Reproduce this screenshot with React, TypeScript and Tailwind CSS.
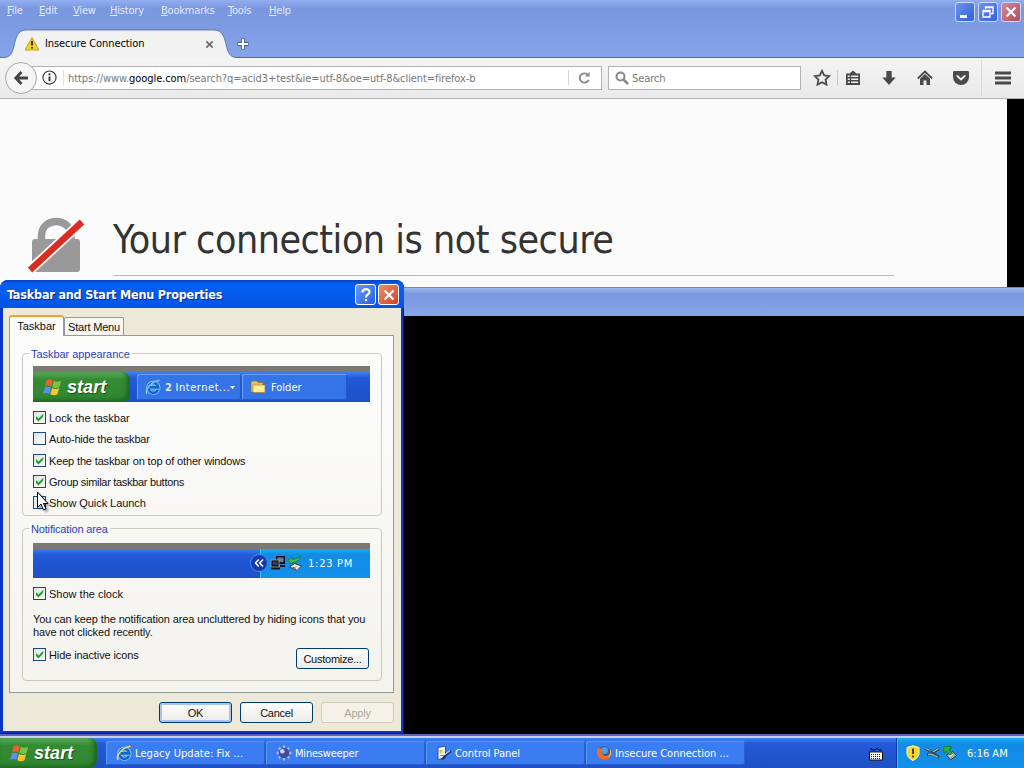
import React from "react";

const TAHOMA = "font-['DejaVu_Sans_Condensed','DejaVu_Sans',sans-serif]";
const SANS = "font-['Liberation_Sans',Arial,sans-serif]";

function WindowsFlag({ className }: { className?: string }) {
  return (
    <svg viewBox="0 0 20 20" className={className}>
      <path d="M3.6 3.2C5.8 1.9 7.9 2 10 3.2L8.3 9.4C6.3 8.2 4.2 8.2 2 9.4Z" fill="#e8602c" />
      <path d="M11 3.8c2.2 1.2 4.6 1.3 7.2 0L16.500 10c-2.400 1.300-4.800 1.200-7.200 0Z" fill="#7cc142" />
      <path d="M1.700 10.600c2.200-1.200 4.300-1.200 6.300 0L6.300 16.800C4.300 15.600 2.200 15.600 0 16.800Z" fill="#5b8ff0" />
      <path d="M9 11.100c2.400 1.300 4.800 1.300 7.200 0l-1.700 6.200c-2.400 1.300-4.800 1.300-7.200 0Z" fill="#f7c52c" />
    </svg>
  );
}

function IEIcon({ className, ring = "#f3d867" }: { className?: string; ring?: string }) {
  return (
    <svg viewBox="0 0 16 16" className={className}>
      <path d="M13 10.600A5 5 0 1 1 13.300 8.400H5" fill="none" stroke="#8fd4ff" strokeWidth="4" />
      <path d="M13 10.600A5 5 0 1 1 13.300 8.400H5" fill="none" stroke="#1668c4" strokeWidth="2.700" />
      <path d="M2 15C-.5 11 6 2.500 14.500 1.200" fill="none" stroke={ring} strokeWidth="1.500" />
    </svg>
  );
}

function Folder() {
  return (
    <svg viewBox="0 0 16 16" className="size-4">
      <path d="M1 3.500 2 2h5l1 1.500h5V13H1z" fill="#e8bf55" stroke="#8e6c1b" strokeWidth=".6" />
      <path d="M3 6H15V13.500H3z" fill="#ffeda0" stroke="#a27b22" strokeWidth=".6" />
    </svg>
  );
}

function Mine() {
  return (
    <svg viewBox="0 0 16 16" className="size-4">
      <path d="M8 .5V15.500M.5 8H15.500M2.800 2.800 13.200 13.200M13.200 2.800 2.800 13.200" stroke="#aab8f4" strokeWidth="2.300" />
      <circle cx="8" cy="8" r="5.300" fill="#454c95" />
      <circle cx="6.300" cy="6.300" r="2.300" fill="#cdd5ff" />
    </svg>
  );
}

function ControlPanelIcon() {
  return (
    <svg viewBox="0 0 16 16" className="size-4">
      <path d="M2 2.500 9.500 1V13L2 14.500z" fill="#e9edf2" stroke="#2c4a85" strokeWidth=".9" />
      <path d="M3.500 5h3v3h-3z" fill="#e7c23b" />
      <path d="M4.500 10.500h3" stroke="#4c9a49" />
      <path d="M6 14.500 9.500 10.500 15 6" fill="none" stroke="#1f345f" strokeWidth="2.200" />
      <path d="M9 9.500l5-4" stroke="#b9c9e6" strokeWidth="1.200" />
    </svg>
  );
}

function FirefoxIcon() {
  return (
    <svg viewBox="0 0 16 16" className="size-4">
      <circle cx="8" cy="7.500" r="6.500" fill="#2d5fae" />
      <circle cx="8.500" cy="5.500" r="3.500" fill="#4f9fdf" />
      <path d="M2 2.500C.3 5.500.5 9.500 2.500 12c3.300 4 9.500 3.600 12-.8 1.300-2.400 1-5.500-.2-7.500.5 3.800-1 7-4.300 7.300-2 .1-3-1-3.500-2.300C5 8.500 5 6.500 7 6.400 5.500 6 5 4.500 5 3.500 4 3.500 3 3.300 2 2.500z" fill="#f06a21" />
      <path d="M14.300 3.700c1.500 3 .8 7.300-2.300 9.300 1.800-2.500 2.500-6 2.300-9.300z" fill="#ffc73a" />
    </svg>
  );
}

function EjectIcon({ className }: { className?: string }) {
  return (
    <svg viewBox="0 0 16 16" className={className}>
      <path d="M2.500 12 7.500 8.500l7 2.500L10 15.500z" fill="#dfe3e0" stroke="#333" strokeWidth=".9" />
      <path d="M5.500 12.300l3.500 1" stroke="#555" />
      <path d="M.8 5.500 5 2.500V4.200C9 4.200 11 3 13.500.8 12.500 5 10 7.600 5.500 7.600V9.500z" fill="#3fbb3a" stroke="#14641a" strokeWidth=".6" />
    </svg>
  );
}

function DriveIcon({ className }: { className?: string }) {
  return (
    <svg viewBox="0 0 16 16" className={className}>
      <path d="M4.500 10 11 6.500l3.500 4L8.500 15z" fill="#9fb0ae" stroke="#2a3f44" strokeWidth="1" />
      <path d="M7 11.500l4-2.300" stroke="#e4ebe8" strokeWidth="1.300" />
      <path d="M1.500 1.500H9V4L7 5l3.500 3.500L8 10 4.500 6.500 2 8z" fill="#2fae34" stroke="#15651c" strokeWidth=".6" />
    </svg>
  );
}

function Network() {
  return (
    <svg viewBox="0 0 16 16" className="size-4">
      <path d="M6 1h9v8H6z" fill="#111" />
      <path d="M7.500 2.500h6v4.500h-6z" fill="#6c7fae" />
      <path d="M1 5h8v7H1z" fill="#111" stroke="#b9b9a9" strokeWidth=".7" />
      <path d="M2.500 6.500h5v3.500h-5z" fill="#2c3c74" />
      <path d="M1 13.500h9M10 11h5" stroke="#111" strokeWidth="2" />
    </svg>
  );
}

function CheckBox({ checked }: { checked?: boolean }) {
  return (
    <span className="flex size-[13px] shrink-0 items-center justify-center border border-[#1d4b78] bg-linear-to-br from-[#dde2e6] to-white">
      {checked && (
        <svg viewBox="0 0 9 9" className="size-[9px]">
          <path d="M1 3v3l2.500 2.500L8.300 3.500V.7L3.500 5.500z" fill="#21a121" />
        </svg>
      )}
    </span>
  );
}

function Option({ label, checked, height = "h-[21px]", tracking = "" }: { label: string; checked?: boolean; height?: string; tracking?: string }) {
  return (
    <label className={`flex items-center gap-[3px] whitespace-nowrap ${height} ${tracking}`}>
      <CheckBox checked={checked} />
      <span className="pt-[2px] leading-[13px]">{label}</span>
    </label>
  );
}

const menus = [
  ["File", "w-8"],
  ["Edit", "w-[34px]"],
  ["View", "w-[37px]"],
  ["History", "w-[51px]"],
  ["Bookmarks", "w-[67px]"],
  ["Tools", "w-[41px]"],
  ["Help", "w-10"],
];

function CaptionButton({ children, tone }: { children: React.ReactNode; tone: string }) {
  return (
    <span className={`flex size-5 items-center justify-center rounded-[3px] border border-[#c9d7fb] ${tone}`}>
      <svg viewBox="0 0 18 18" className="size-[18px]" fill="none" stroke="#fff">{children}</svg>
    </span>
  );
}

function Browser() {
  return (
    <section className={`absolute inset-x-0 top-0 flex h-[287px] flex-col ${TAHOMA}`}>
      <header className="flex h-[58px] shrink-0 flex-col bg-linear-to-b from-[#93aef0] via-[#7a96df] via-15% to-[#84a4ea] shadow-[inset_0_-1px_0_#5266a5]">
        <div className="flex h-[26px] shrink-0 items-start justify-between">
          <nav className="flex pt-1 pl-[7px] text-[11px] leading-[14px] tracking-[-0.2px] text-[#e2ebfd]">
            {menus.map(([m, w]) => (
              <span key={m} className={w}>
                <u className="underline-offset-1">{m[0]}</u>{m.slice(1)}
              </span>
            ))}
          </nav>
          <div className="flex gap-[3px] pt-[2px] pr-[3px]">
            <CaptionButton tone="bg-linear-to-br from-[#6f93ee] to-[#2f5fdc]"><path d="M4 13.500h7" strokeWidth="3" /></CaptionButton>
            <CaptionButton tone="bg-linear-to-br from-[#6f93ee] to-[#2f5fdc]"><path d="M6.500 6V4h7.500v6.500h-2.500M6.500 4.500H14" strokeWidth="1.300" /><path d="M4 7.500h7v6.500H4zM4 8.500h7" strokeWidth="1.300" /></CaptionButton>
            <CaptionButton tone="bg-linear-to-br from-[#d08a9a] to-[#b24a5c]"><path d="M4.500 4.500l9 9M13.500 4.500l-9 9" strokeWidth="2.200" /></CaptionButton>
          </div>
        </div>
        <div className="flex h-8 shrink-0 items-start">
          <div className="relative flex h-8 w-[232px] items-center pt-1 pl-6">
            <svg viewBox="0 0 240 32" className="absolute top-0 left-0 h-8 w-[240px]">
              <path d="M0 32V31.500H3C11 31.500 12 27 14 20 16 11 18 4 26 4H214C222 4 224 10 226 18 228 27 230 31.500 237 31.500V32z" fill="#f2f2f3" />
              <path d="M8 31H231V32H8z" fill="#f2f2f3" />
              <path d="M0 31.500H3C11 31.500 12 27 14 20 16 11 18 4 26 4H214C222 4 224 10 226 18 228 27 230 31.500 237 31.500" fill="none" stroke="#4d64a8" strokeWidth=".8" />
            </svg>
            <svg viewBox="0 0 16 16" className="relative size-4">
              <path d="M8 1.500 15 14H1z" fill="#f4d21f" stroke="#c3a327" strokeWidth="1" strokeLinejoin="round" />
              <path d="M8 5v4.500M8 11v1.600" stroke="#222" strokeWidth="1.800" />
            </svg>
            <span className="relative ml-[5px] w-[160px] pt-px text-[11px] tracking-[-0.1px] text-black">Insecure Connection</span>
            <svg viewBox="0 0 10 10" className="relative h-[9px] w-[9px]"><path d="M1.500 1.500l7 7M8.500 1.500l-7 7" stroke="#6e6e6e" strokeWidth="2" /></svg>
          </div>
          <svg viewBox="0 0 12 12" className="mt-3 ml-[5px] size-3"><path d="M6 .5v11M.5 6h11" stroke="#4a5c94" strokeWidth="4" /><path d="M6 1v10M1 6h10" stroke="#fff" strokeWidth="2.200" /></svg>
        </div>
      </header>
      <div className="flex h-[41px] shrink-0 items-center border-b border-b-[#b5b5b5] bg-linear-to-b from-[#f4f4f4] to-[#e9e9e9] pb-px">
        <div className="z-10 ml-[5px] flex size-8 shrink-0 items-center justify-center rounded-full border border-[#a8a8a8] bg-[#f5f5f5]">
          <svg viewBox="0 0 16 16" className="size-4" fill="none" stroke="#444" strokeWidth="2.800"><path d="M8.500 2 2.800 8l5.700 6M3 8h12" /></svg>
        </div>
        <div className="-ml-2 flex h-6 w-[573px] items-center border border-[#b3b3b3] bg-white pl-3">
          <svg viewBox="0 0 16 16" className="size-[15px]" fill="none" stroke="#333"><circle cx="8" cy="8" r="7" strokeWidth="1.200" /><path d="M8 7v5M8 3.500v2" strokeWidth="2" /></svg>
          <span className="ml-1.5 h-4 w-px bg-[#e0e0e0]" />
          <span className="ml-[4px] w-[500px] pt-[3px] text-[11px] tracking-[-0.07px] whitespace-nowrap text-[#777]">https://www.<span className="text-black">google.com</span>/search?q=acid3+test&amp;ie=utf-8&amp;oe=utf-8&amp;client=firefox-b</span>
          <span className="h-[15px] w-px bg-[#d5d5d5]" />
          <svg viewBox="0 0 14 14" className="ml-[9px] size-[13px]" fill="none" stroke="#888" strokeWidth="2"><path d="M11.500 9.500A5 5 0 1 1 10.500 4" /><path d="M12.500 1v5h-5z" fill="#888" stroke="none" /></svg>
        </div>
        <div className="ml-1.5 flex h-6 w-[193px] items-center border border-[#b3b3b3] bg-white pl-1.5 text-[11px] text-[#777]">
          <svg viewBox="0 0 14 14" className="size-[14px]" fill="none" stroke="#888" strokeWidth="2"><circle cx="5.500" cy="5.500" r="4" /><path d="M8.500 8.500l4.500 4.500" strokeWidth="2.500" /></svg>
          <span className="ml-[3px] pt-[3px] tracking-[-0.1px]">Search</span>
        </div>
        <div className="flex flex-1 items-center">
          <svg viewBox="0 0 18 18" className="ml-3 size-[18px]" fill="none" stroke="#4a4a4a" strokeWidth="1.800"><path d="M9 1.800l2.200 4.600 5 .7-3.600 3.500.9 5L9 13.200l-4.500 2.400.9-5L1.800 7.100l5-.7z" /></svg>
          <span className="ml-[6px] h-[15px] w-px bg-[#c9c9c9]" />
          <svg viewBox="0 0 16 16" className="ml-[7px] size-4"><path d="M1 3.500h3.500L8 .5l3.500 3H15V15H1z" fill="#4a4a4a" /><path d="M2.800 6.200h2M6.200 6.200h7M2.800 9.200h2M6.200 9.200h7M2.800 12.200h2M6.200 12.200h7" stroke="#f0f0f0" strokeWidth="1.500" /></svg>
          <svg viewBox="0 0 16 16" className="ml-5 size-4"><path d="M5.300 1h5.400v6.500h4L8 15 1.300 7.500h4z" fill="#4a4a4a" /></svg>
          <svg viewBox="0 0 16 16" className="ml-5 size-4"><path d="M.8 8.500 8 1.500l7.200 7" fill="none" stroke="#4a4a4a" strokeWidth="1.800" /><path d="M3 8.700l5-4.800 5 4.800V15H9.500v-4.500h-3V15H3z" fill="#4a4a4a" /></svg>
          <svg viewBox="0 0 16 16" className="ml-5 size-4"><path d="M1.500 1h13c1 0 1.500.5 1.500 1.500V7a8 8 0 0 1-16 0V2.500C0 1.500.5 1 1.500 1z" fill="#4a4a4a" /><path d="M4.300 6l3.700 3.500L11.700 6" fill="none" stroke="#f0f0f0" strokeWidth="1.900" strokeLinecap="round" /></svg>
          <span className="ml-[12px] h-9 w-px bg-[#d8d8d8]" />
          <svg viewBox="0 0 16 14" className="ml-[13px] h-[14px] w-4"><path d="M0 2h16M0 7h16M0 12h16" stroke="#4a4a4a" strokeWidth="2.800" /></svg>
        </div>
      </div>
      <div className="flex flex-1 bg-black">
        <div className="flex w-[1007px] items-start bg-[#fbfbfb] pt-[117px] pl-7">
          <svg viewBox="0 0 58 58" className="h-[58px] w-[58px]">
            <path d="M13.500 28V20C13.500 .5 43 .5 43 20V28" fill="none" stroke="#999" strokeWidth="7.500" />
            <rect x="4" y="23" width="48" height="33" rx="3" fill="#999" />
            <path d="M2 54 54 6" stroke="#fbfbfb" strokeWidth="10" />
            <path d="M2 54 54 6" stroke="#d92d21" strokeWidth="6.500" />
          </svg>
          <h1 className="ml-[27px] h-[60px] w-[781px] border-b border-[#b9b9b9] pt-px text-[39px] leading-[46px] tracking-[-0.48px] whitespace-nowrap text-[#333]">Your connection is not secure</h1>
        </div>
      </div>
    </section>
  );
}

function StartButton() {
  return (
    <div className="flex w-[97px] shrink-0 items-center rounded-r-lg bg-linear-to-b from-[#5cac5a] via-[#338b34] via-25% to-[#2f8630] pl-[10px] shadow-[inset_-3px_-2px_4px_#1d6420]">
      <WindowsFlag className="size-5" />
      <span className="ml-1 font-['Liberation_Sans',Arial,sans-serif] text-[18px] leading-5 font-bold tracking-[0.05px] text-white italic [text-shadow:1px_1px_1px_#1a4d1b]">start</span>
    </div>
  );
}

function Button({ label, kind = "" }: { label: string; kind?: string }) {
  const look =
    kind === "default"
      ? "border-[#003c74] bg-linear-to-b from-white to-[#ecebe6] shadow-[inset_0_0_0_2px_#a9c4f2]"
      : kind === "disabled"
        ? "border-[#d0cdbd] bg-[#f3f1e8] text-[#aca899]"
        : "border-[#003c74] bg-linear-to-b from-white to-[#ecebe6]";
  return <button className={`flex h-[21px] w-[73px] items-center justify-center rounded-[3px] border pt-px tracking-[-0.25px] ${look}`}>{label}</button>;
}

function Properties() {
  return (
    <section className="absolute top-[280px] left-0 flex h-[454px] w-[404px] flex-col overflow-hidden rounded-t-[8px] bg-[#0a35c8] shadow-[inset_-1px_-1px_0_#00138c]">
      <header className="flex h-[28px] shrink-0 items-center justify-between bg-linear-to-b from-[#0842c0] via-[#0460f5] via-15% to-[#0455e6] pt-[1px] pr-[5px] pl-[7px]">
        <h2 className="pt-[2px] font-['DejaVu_Sans_Condensed','DejaVu_Sans',sans-serif] text-[12.500px] font-bold tracking-[-0.19px] text-white [text-shadow:1px_1px_0_#0a2a80]">Taskbar and Start Menu Properties</h2>
        <div className="flex gap-[2px]">
          <span className="flex size-[21px] items-center justify-center rounded-[3px] border border-white bg-linear-to-br from-[#6b97f5] to-[#2360e0]">
            <svg viewBox="0 0 18 18" className="size-[18px]" fill="none" stroke="#fff" strokeWidth="2.200"><path d="M5.500 6.500C5.500 2 12.500 2 12.500 6 12.500 8.500 9 8.500 9 11.500M9 13v2.200" /></svg>
          </span>
          <span className="flex size-[21px] items-center justify-center rounded-[3px] border border-white bg-linear-to-br from-[#ee8a6c] to-[#d0401c]">
            <svg viewBox="0 0 18 18" className="size-[18px]" fill="none" stroke="#fff" strokeWidth="2.200"><path d="M4.500 4.500l9 9M13.500 4.500l-9 9" /></svg>
          </span>
        </div>
      </header>
      <div className={`mx-[3px] mb-[3px] flex h-[423px] flex-col bg-[#ece9d8] pt-[6px] pr-[7px] pl-[6px] text-[11px] text-[#111] ${SANS}`}>
        <div className="z-10 flex h-[21px] items-end">
          <div className="-mb-px flex h-[21px] w-[55px] items-center justify-center rounded-t-[3px] border border-t-2 border-[#919b9c] border-t-[#f0a02c] border-b-0 bg-[#fcfcfb] pb-px">Taskbar</div>
          <div className="flex h-[18px] w-[60px] items-center justify-center rounded-t-[2px] border border-b-0 border-[#919b9c] bg-[#f7f6f1] pt-px tracking-[-0.2px] whitespace-nowrap">Start Menu</div>
        </div>
        <div className="flex h-[358px] flex-col border border-[#919b9c] bg-linear-to-b from-[#fcfcfb] to-[#f4f3ee] pt-[11px] pr-[11px] pl-3">
          <fieldset className="h-[169px] min-w-0 rounded-[4px] border border-[#cccabf] px-[10px]">
            <legend className="-ml-[4px] h-[13px] px-[2px] leading-[15px] tracking-[-0.05px] text-[#2b3fc0]">Taskbar appearance</legend>
            <div className={`mt-[6px] flex h-9 w-[337px] border-t-[6px] border-[#7b7972] bg-linear-to-b from-[#3f80f5] via-[#2159d8] via-20% to-[#1e50c8] text-[11px] text-white ${TAHOMA}`}>
              <StartButton />
              <div className="my-[2px] ml-[7px] flex w-[104px] items-center rounded-[2px] bg-[#3573e8] pl-2 shadow-[inset_1px_1px_0_#6ba0ff,inset_-1px_-1px_0_#2458c8]">
                <IEIcon className="size-4" ring="#7cc4f8" />
                <span className="ml-1 pt-[2px] tracking-[0.55px] whitespace-nowrap"><b className="mr-[3px] text-[#e8e6d8]">2</b>Internet...</span>
                <svg viewBox="0 0 5 3" className="h-[3px] w-[5px] shrink-0"><path d="M0 0h5L2.500 3z" fill="#fff" /></svg>
              </div>
              <div className="my-[2px] ml-[1px] flex w-[105px] items-center gap-[5px] rounded-[2px] bg-[#3573e8] pl-2 shadow-[inset_1px_1px_0_#6ba0ff,inset_-1px_-1px_0_#2458c8]">
                <Folder />
                <span className="pt-[2px]">Folder</span>
              </div>
            </div>
            <div className="mt-[5px] flex flex-col">
              <Option label="Lock the taskbar" checked />
              <Option label="Auto-hide the taskbar" tracking="tracking-[-0.18px]" />
              <Option label="Keep the taskbar on top of other windows" checked height="h-[22px]" tracking="tracking-[-0.15px]" />
              <Option label="Group similar taskbar buttons" checked tracking="tracking-[-0.3px]" />
              <Option label="Show Quick Launch" tracking="tracking-[-0.06px]" />
            </div>
          </fieldset>
          <fieldset className="mt-[6px] h-[159px] min-w-0 rounded-[4px] border border-[#cccabf] px-[10px]">
            <legend className="-ml-[4px] h-[13px] px-[2px] leading-[15px] tracking-[-0.17px] text-[#2b3fc0]">Notification area</legend>
            <div className={`mt-[8px] flex h-[35px] w-[337px] border-t-[6px] border-[#7b7972] bg-linear-to-b from-[#3f80f5] via-[#2159d8] via-20% to-[#1e50c8] text-[11px] text-white ${TAHOMA}`}>
              <div className="w-[227px]" />
              <div className="flex flex-1 items-center bg-linear-to-b from-[#18b0f5] via-[#128be6] via-20% to-[#1290ea] pb-px shadow-[inset_1px_0_0_#2bd0ff]">
                <span className="-ml-[9px] flex size-4 shrink-0 items-center justify-center rounded-full bg-[#123cae] ring-1 ring-[#4d86e8]">
                  <svg viewBox="0 0 10 10" className="size-[10px]" fill="none" stroke="#fff" strokeWidth="1.500"><path d="M4.800 1.500 1.500 5l3.300 3.500M9 1.500 5.700 5 9 8.500" /></svg>
                </span>
                <span className="ml-[3px] flex"><Network /><EjectIcon className="ml-px size-4" /></span>
                <span className="ml-[5px] pt-[2px] tracking-[0.75px] whitespace-nowrap">1:23 PM</span>
              </div>
            </div>
            <div className="mt-[5px]"><Option label="Show the clock" checked /></div>
            <p className="mt-[9px] leading-[13px] tracking-[-0.12px] whitespace-nowrap">You can keep the notification area uncluttered by hiding icons that you<br />have not clicked recently.</p>
            <div className="mt-[9px] flex w-[336px] items-start justify-between">
              <Option label="Hide inactive icons" checked height="h-[13px]" tracking="tracking-[-0.11px]" />
              <Button label="Customize..." />
            </div>
          </fieldset>
        </div>
        <div className="mt-[9px] flex justify-end gap-2">
          <Button label="OK" kind="default" />
          <Button label="Cancel" />
          <Button label="Apply" kind="disabled" />
        </div>
      </div>
    </section>
  );
}

const tasks = [
  { label: "Legacy Update: Fix ...", icon: <IEIcon className="size-4" />, tracking: "tracking-[0.07px]" },
  { label: "Minesweeper", icon: <Mine />, tracking: "tracking-[-0.2px]" },
  { label: "Control Panel", icon: <ControlPanelIcon />, tracking: "tracking-[-0.05px]" },
  { label: "Insecure Connection ...", icon: <FirefoxIcon />, tracking: "tracking-normal" },
];

function Taskbar() {
  return (
    <footer className={`absolute inset-x-0 bottom-0 flex h-[34px] flex-col bg-[#5f62b8] pt-[2px] text-[11px] text-white ${TAHOMA}`}>
      <div className="h-[2px] bg-[#c8cdf5]" />
      <div className="flex flex-1 bg-linear-to-b from-[#3f80f5] via-[#2358d8] via-20% to-[#1f50c4]">
        <StartButton />
        <div className="ml-[9px] flex items-stretch gap-px py-[3px]">
          {tasks.map((t) => (
            <div key={t.label} className="flex w-[159px] items-center rounded-[2px] bg-[#3a7df2] pl-[10px] whitespace-nowrap shadow-[inset_1px_1px_0_#5f98fb,inset_-1px_-1px_0_#2860d2]">
              {t.icon}
              <span className={`ml-[3px] pt-[2px] ${t.tracking}`}>{t.label}</span>
            </div>
          ))}
        </div>
        <svg viewBox="0 0 14 14" className="mt-[9px] mr-[13px] ml-auto h-[14px] w-[14px]">
          <path d="M1 2h2l1 1h2l1-1h2l1 1h3" fill="none" stroke="#111" />
          <rect x=".5" y="5" width="13" height="8" fill="#fff" stroke="#111" />
          <path d="M2 7.500h10M2 9.500h10M2 11.500h10" stroke="#111" strokeDasharray="1 1" />
        </svg>
        <div className="flex w-32 items-center bg-linear-to-b from-[#18b0f5] via-[#128be6] via-20% to-[#1290ea] pl-[9px] shadow-[inset_1px_0_0_#0b3fa8,inset_2px_0_0_#2bc0ff]">
          <svg viewBox="0 0 16 16" className="size-4"><path d="M8 .8 14 2.500V8c0 4-3 6-6 7.500C5 14 2 12 2 8V2.500z" fill="#f7d629" stroke="#fff5bd" /><path d="M8 3.500v5.500M8 10.500v2" stroke="#222" strokeWidth="1.600" /></svg>
          <svg viewBox="0 0 16 16" className="ml-[3px] size-4"><path d="M1 3.500 6.500 6M8 8l7-4.500M3 9.500 9 8.500l6 4" fill="none" stroke="#2a4348" strokeWidth="3" /><path d="M1.500 3.300 6 5.500M9 7l5.500-3.500M4 9.300h4l6 3" stroke="#a9c0ba" strokeWidth="1.200" fill="none" /></svg>
          <DriveIcon className="ml-[2px] size-4" />
          <span className="ml-[9px] pt-[2px] whitespace-nowrap">6:16 AM</span>
        </div>
      </div>
    </footer>
  );
}

export default function App() {
  return (
    <main className="relative h-[768px] w-[1024px] overflow-hidden bg-black select-none">
      <Browser />
      <div className="absolute top-[287px] right-0 left-[403px] h-[29px] border-t border-[#6c83cf] bg-linear-to-b from-[#9db8f2] via-[#7c99df] via-20% to-[#86a5ec]" />
      <Properties />
      <Taskbar />
      <svg viewBox="0 0 12 21" className="absolute top-[491px] left-[37px] h-[21px] w-3 drop-shadow-[2px_2px_1px_rgba(0,0,0,0.35)]">
        <path d="M.5 1v15.500L4 13l2.500 6 2.500-1-2.500-5.500H11z" fill="#fff" stroke="#000" />
      </svg>
    </main>
  );
}
